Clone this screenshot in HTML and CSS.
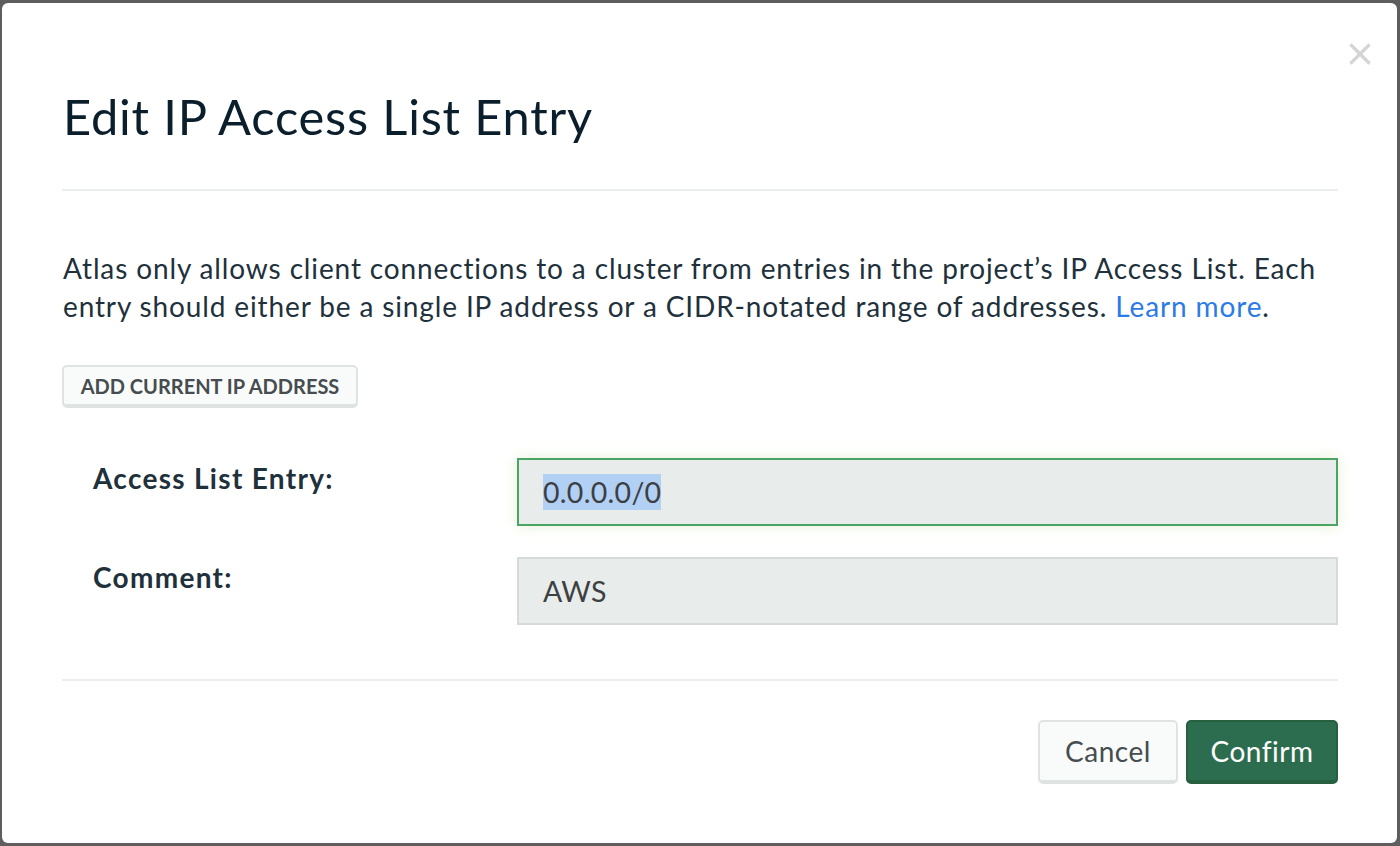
FILE: index.html
```html
<!DOCTYPE html>
<html lang="en">
<head>
<meta charset="utf-8">
<title>Edit IP Access List Entry</title>
<link rel="stylesheet" href="styles.css">
</head>
<body>
<div class="backdrop">
  <div class="modal">
    <button class="close" aria-label="Close">
      <svg width="22" height="22" viewBox="0 0 22 22"><path d="M2.5 2.5 L19.5 19.5 M19.5 2.5 L2.5 19.5" stroke="#d4d4d4" stroke-width="3.2" stroke-linecap="square"/></svg>
    </button>
    <header class="modal-header">
      <h1 class="title">Edit IP Access List Entry</h1>
    </header>
    <section class="modal-body">
      <p class="intro">Atlas only allows client connections to a cluster from entries in the project’s IP Access List. Each entry should either be a single IP address or a CIDR-notated range of addresses. <a class="link" href="#">Learn more</a>.</p>
      <button class="btn-add">ADD CURRENT IP ADDRESS</button>
      <div class="form-grid">
        <label class="field-label">Access List Entry:</label>
        <div class="field field-focus"><span class="selected">0.0.0.0/0</span></div>
        <label class="field-label">Comment:</label>
        <div class="field">AWS</div>
      </div>
    </section>
    <footer class="modal-footer">
      <button class="btn btn-cancel">Cancel</button>
      <button class="btn btn-confirm">Confirm</button>
    </footer>
  </div>
</div>
</body>
</html>
```
FILE: styles.css
```css
html, body {
  margin: 0;
  padding: 0;
  height: 100%;
}
body {
  background: #5e5e5e;
  font-family: "Lato", "Noto Sans", sans-serif;
  color: #21313c;
  overflow: hidden;
}
.backdrop {
  padding: 3px 3px 3px 2px;
  height: 846px;
  box-sizing: border-box;
}
.modal {
  position: relative;
  background: #ffffff;
  border-radius: 6px;
  height: 840px;
  box-sizing: border-box;
  padding: 0 59px 0 60px;
  display: flex;
  flex-direction: column;
}
.close {
  position: absolute;
  top: 40px;
  right: 26px;
  background: none;
  border: 0;
  padding: 0;
  width: 22px;
  height: 22px;
  cursor: pointer;
}
.close svg { display: block; }
.modal-header {
  border-bottom: 2px solid #e9eeed;
  height: 188px;
  box-sizing: border-box;
  padding-top: 84px;
  flex: none;
}
.title {
  margin: 0;
  font-size: 48.8px;
  font-weight: 400;
  letter-spacing: 0.8px;
  color: #0b1e2c;
  line-height: 58px;
  padding-left: 1px;
}
.modal-body {
  padding-top: 58px;
  flex: 1;
}
.intro {
  margin: 0 -40px 0 0;
  font-size: 28px;
  line-height: 38px;
  letter-spacing: 0.87px;
  color: #21313c;
  padding-left: 1px;
}
.link {
  color: #2b7be6;
  text-decoration: none;
}
.btn-add {
  display: block;
  margin-top: 40px;
  height: 43px;
  width: 296px;
  background: #f9fbfa;
  border: 2px solid #dfe4e3;
  border-bottom-width: 4px;
  border-radius: 5px;
  font-family: inherit;
  font-weight: 700;
  font-size: 20px;
  color: #464c4f;
  padding: 0;
}
.form-grid {
  margin-top: 50px;
  display: grid;
  grid-template-columns: 455px 1fr;
  row-gap: 31px;
  align-items: start;
}
.field-label {
  padding-left: 31px;
  padding-top: 3px;
  font-weight: 700;
  font-size: 28px;
  line-height: 34px;
  letter-spacing: 1.3px;
  color: #21313c;
}
.field {
  height: 68px;
  box-sizing: border-box;
  background: #e8ecea;
  border: 2px solid #d6dad9;
  padding-left: 24px;
  font-size: 28.5px;
  letter-spacing: 0.3px;
  display: flex;
  align-items: center;
  color: #3d4043;
}
.field-focus {
  border-color: #4aa564;
  box-shadow: 0 0 12px rgba(200, 220, 160, 0.45);
}
.selected {
  background: #b1d0f4;
  padding: 1px 0;
}
.modal-footer {
  border-top: 2px solid #e9eeed;
  height: 164px;
  box-sizing: border-box;
  padding-top: 39px;
  display: flex;
  justify-content: flex-end;
  align-items: flex-start;
  gap: 8px;
  flex: none;
}
.btn {
  height: 64px;
  border-radius: 5px;
  font-family: inherit;
  font-size: 28px;
  letter-spacing: 0.5px;
  padding: 0;
}
.btn-cancel {
  width: 140px;
  background: #f9fbfa;
  border: 2px solid #dfe4e3;
  border-bottom-width: 4px;
  color: #464c4f;
}
.btn-confirm {
  width: 152px;
  background: #2d6d4f;
  border: 2px solid #26603f;
  border-bottom-width: 4px;
  color: #ffffff;
}
```
